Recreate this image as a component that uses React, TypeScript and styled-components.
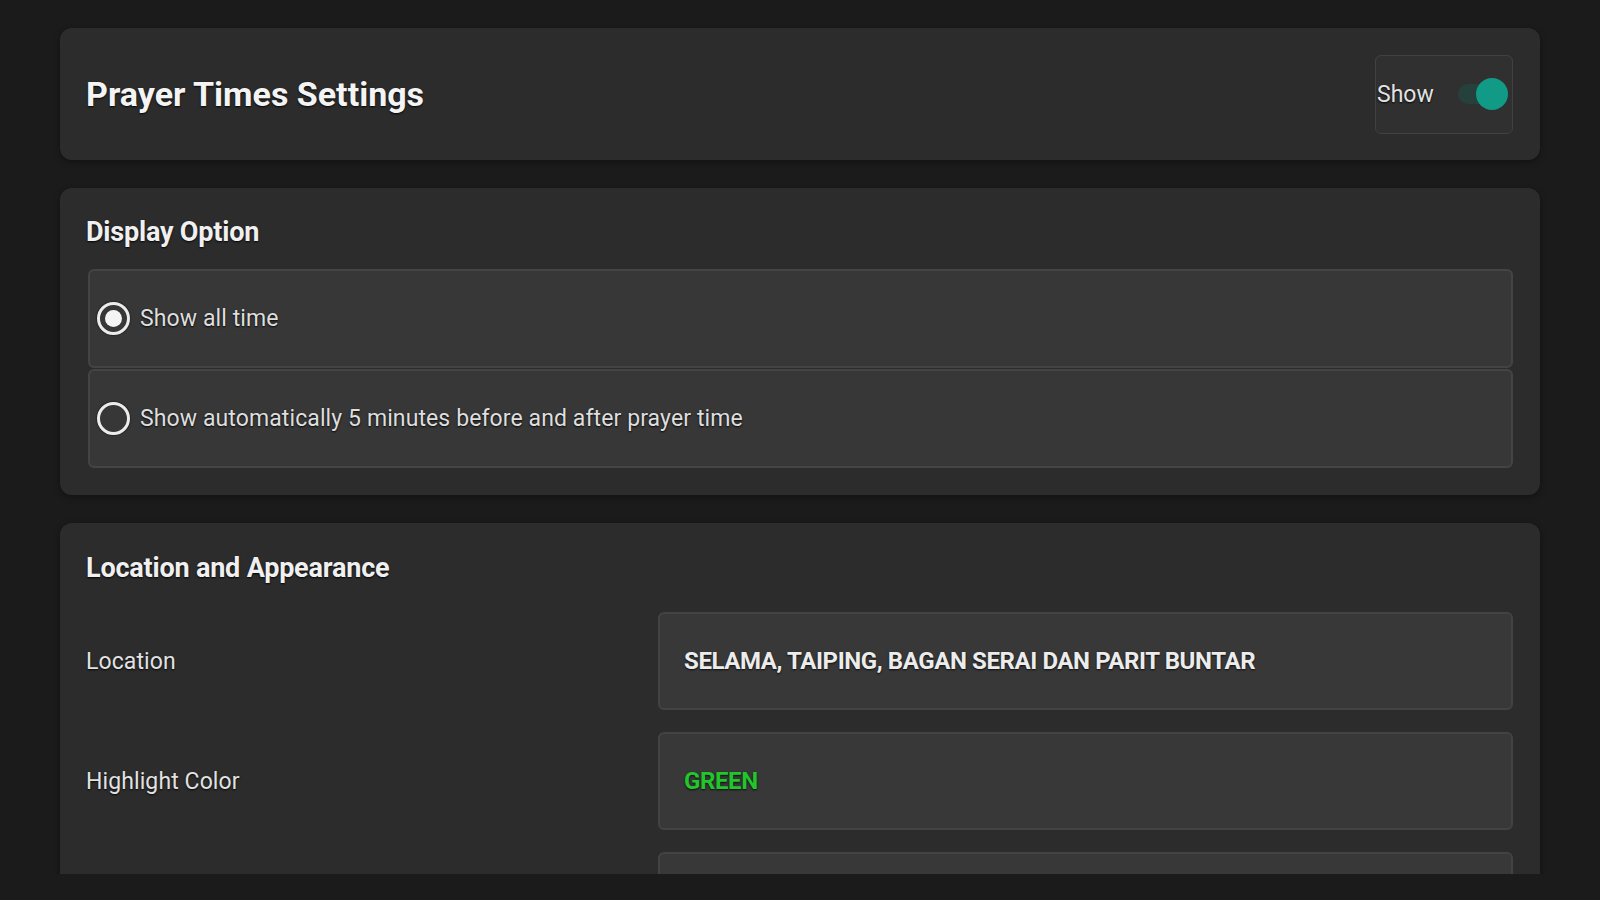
import React from 'react';
import styled, { createGlobalStyle } from 'styled-components';

const GlobalStyle = createGlobalStyle`
  html, body {
    margin: 0;
    padding: 0;
    background: #1b1b1b;
    font-family: Roboto, "Noto Sans", "Liberation Sans", sans-serif;
    color: #e6e6e6;
  }
`;

const Viewport = styled.div`
  height: 874px;
  overflow: hidden;
  padding: 28px 60px 0;
  box-sizing: border-box;
  display: flex;
  flex-direction: column;
  gap: 28px;
`;

const Card = styled.section`
  background: #2c2c2c;
  border-radius: 12px;
  box-shadow: 0 2px 6px rgba(0, 0, 0, 0.35);
  padding: 28px 27px 27px 26px;
  flex-shrink: 0;
`;

const HeaderCard = styled(Card)`
  height: 132px;
  box-sizing: border-box;
  padding-top: 0;
  padding-bottom: 0;
  display: flex;
  align-items: center;
  justify-content: space-between;
`;

const PageTitle = styled.h1`
  margin: 0;
  font-size: 34px;
  font-weight: 700;
  color: #f4f4f4;
  text-shadow: 0 1px 2px rgba(0, 0, 0, 0.9);
`;

const ToggleBox = styled.div`
  width: 138px;
  height: 79px;
  box-sizing: border-box;
  background: #303030;
  border: 1px solid #414141;
  border-radius: 6px;
  display: flex;
  align-items: center;
  justify-content: space-between;
  padding: 0 4px 0 1px;
`;

const ToggleLabel = styled.span`
  font-size: 23px;
  color: #e2e2e2;
  text-shadow: 0 1px 2px rgba(0, 0, 0, 0.9);
`;

const Track = styled.div`
  position: relative;
  width: 50px;
  height: 20px;
  border-radius: 10px;
  background: #26403c;
`;

const Thumb = styled.div`
  position: absolute;
  right: 0;
  top: -6px;
  width: 32px;
  height: 32px;
  border-radius: 50%;
  background: #119a86;
`;

const SectionTitle = styled.h2<{ $gap: number }>`
  margin: 0 0 ${p => p.$gap}px;
  font-size: 27px;
  line-height: 32px;
  font-weight: 700;
  letter-spacing: -0.2px;
  color: #f0f0f0;
  text-shadow: 0 1px 2px rgba(0, 0, 0, 0.9);
`;

const OptionList = styled.div`
  display: flex;
  flex-direction: column;
  margin-left: 2px;
`;

const OptionRow = styled.label`
  height: 99px;
  box-sizing: border-box;
  background: #373737;
  border: 2px solid #444;
  border-radius: 6px;
  display: flex;
  align-items: center;
  gap: 10px;
  padding-left: 7px;
  cursor: pointer;
  & + & {
    margin-top: 1px;
  }
`;

const Radio = styled.span<{ $checked: boolean }>`
  width: 33px;
  height: 33px;
  box-sizing: border-box;
  border-radius: 50%;
  border: 3px solid #ececec;
  display: flex;
  align-items: center;
  justify-content: center;
  flex-shrink: 0;
  box-shadow: 0 0 2px rgba(0, 0, 0, 0.9);

  &::after {
    content: '';
    width: 17px;
    height: 17px;
    border-radius: 50%;
    background: #f4f4f4;
    display: ${p => (p.$checked ? 'block' : 'none')};
  }
`;

const OptionText = styled.span`
  font-size: 23px;
  letter-spacing: 0.1px;
  color: #dedede;
  text-shadow: 0 1px 2px rgba(0, 0, 0, 0.9);
`;

const OpenCard = styled(Card)`
  border-bottom-left-radius: 0;
  border-bottom-right-radius: 0;
  padding-top: 29px;
  padding-bottom: 60px;
`;

const FieldGrid = styled.div`
  display: grid;
  grid-template-columns: 572px 1fr;
  row-gap: 22px;
  align-items: center;
`;

const FieldLabel = styled.span`
  font-size: 23px;
  letter-spacing: 0.1px;
  color: #e2e2e2;
  text-shadow: 0 1px 2px rgba(0, 0, 0, 0.9);
`;

const FieldBox = styled.div<{ $color?: string }>`
  height: 98px;
  box-sizing: border-box;
  background: #383838;
  border: 2px solid #434343;
  border-radius: 6px;
  display: flex;
  align-items: center;
  padding: 0 24px;
  font-size: 24px;
  font-weight: 700;
  letter-spacing: -0.4px;
  color: ${p => p.$color || '#ececec'};
  text-shadow: 0 1px 2px rgba(0, 0, 0, 0.8);
`;

const options = [
  { id: 'all', text: 'Show all time', checked: true },
  { id: 'auto', text: 'Show automatically 5 minutes before and after prayer time', checked: false },
];

const fields = [
  { label: 'Location', value: 'SELAMA, TAIPING, BAGAN SERAI DAN PARIT BUNTAR' },
  { label: 'Highlight Color', value: 'GREEN', color: '#22c52c' },
  { label: 'Font Size', value: '' },
];

export default function App() {
  return (
    <>
      <GlobalStyle />
      <Viewport>
        <HeaderCard>
          <PageTitle>Prayer Times Settings</PageTitle>
          <ToggleBox>
            <ToggleLabel>Show</ToggleLabel>
            <Track>
              <Thumb />
            </Track>
          </ToggleBox>
        </HeaderCard>

        <Card>
          <SectionTitle $gap={21}>Display Option</SectionTitle>
          <OptionList>
            {options.map(o => (
              <OptionRow key={o.id}>
                <Radio $checked={o.checked} />
                <OptionText>{o.text}</OptionText>
              </OptionRow>
            ))}
          </OptionList>
        </Card>

        <OpenCard>
          <SectionTitle $gap={28}>Location and Appearance</SectionTitle>
          <FieldGrid>
            {fields.map(f => (
              <React.Fragment key={f.label}>
                <FieldLabel>{f.value || f.color ? f.label : ''}</FieldLabel>
                <FieldBox $color={f.color}>{f.value}</FieldBox>
              </React.Fragment>
            ))}
          </FieldGrid>
        </OpenCard>
      </Viewport>
    </>
  );
}
